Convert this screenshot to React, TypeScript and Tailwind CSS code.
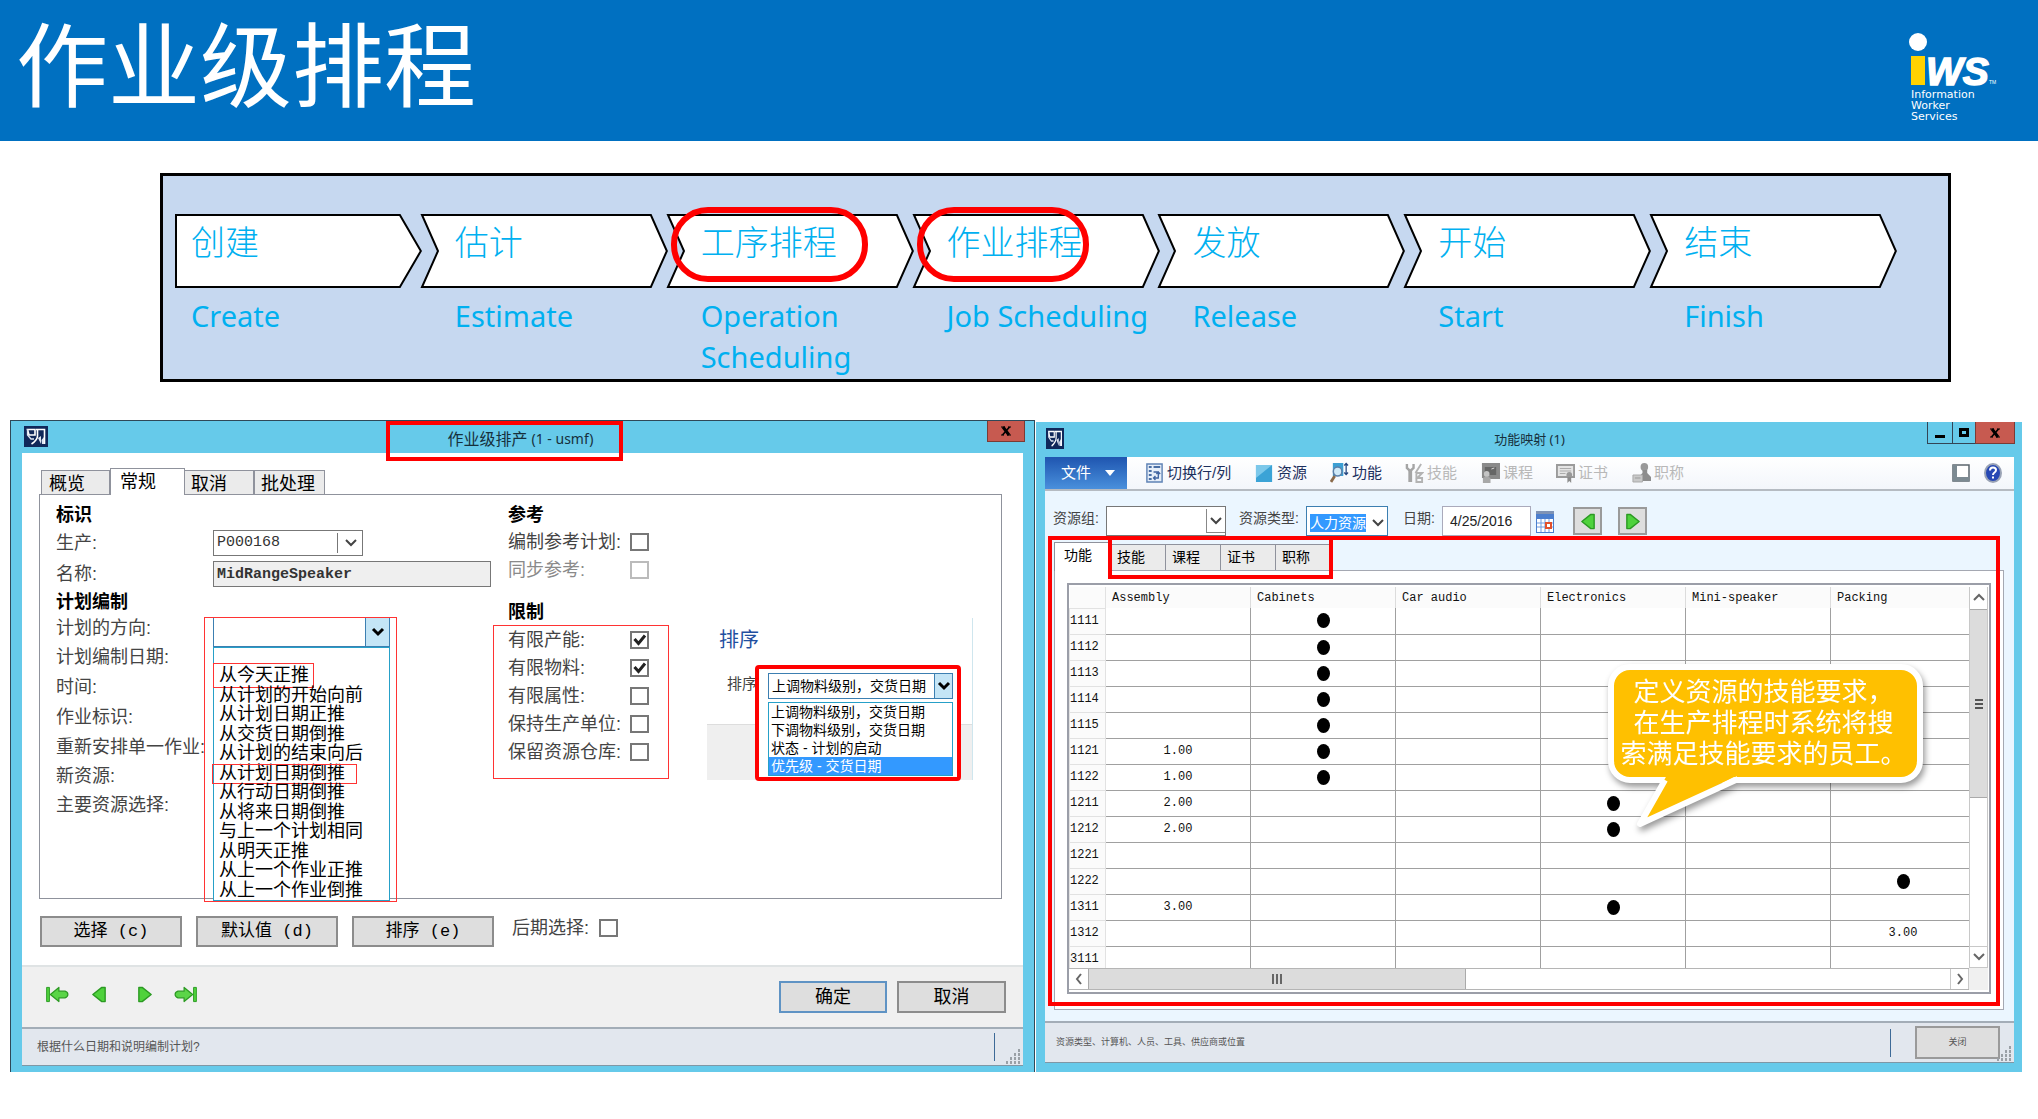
import { useState, type ReactNode } from "react";

const steps = [
  { zh: "创建", en: "Create" },
  { zh: "估计", en: "Estimate" },
  { zh: "工序排程", en: "Operation Scheduling", ring: "-left-[30px] w-[197px]" },
  { zh: "作业排程", en: "Job Scheduling", ring: "-left-[30px] w-[172px]" },
  { zh: "发放", en: "Release" },
  { zh: "开始", en: "Start" },
  { zh: "结束", en: "Finish" },
];

const directions = [
  "从今天正推", "从计划的开始向前", "从计划日期正推", "从交货日期倒推",
  "从计划的结束向后", "从计划日期倒推", "从行动日期倒推", "从将来日期倒推",
  "与上一个计划相同", "从明天正推", "从上一个作业正推", "从上一个作业倒推",
];

const sortOptions = ["上调物料级别，交货日期", "下调物料级别，交货日期", "状态 - 计划的启动", "优先级 - 交货日期"];

const columns = ["Assembly", "Cabinets", "Car audio", "Electronics", "Mini-speaker", "Packing"];

// "x" = a dot, anything else is printed as is
const rows: { id: string; cells: string[] }[] = [
  { id: "1111", cells: ["", "x", "", "", "", ""] },
  { id: "1112", cells: ["", "x", "", "", "", ""] },
  { id: "1113", cells: ["", "x", "", "", "", ""] },
  { id: "1114", cells: ["", "x", "", "", "", ""] },
  { id: "1115", cells: ["", "x", "", "", "", ""] },
  { id: "1121", cells: ["1.00", "x", "", "", "", ""] },
  { id: "1122", cells: ["1.00", "x", "", "", "", ""] },
  { id: "1211", cells: ["2.00", "", "", "x", "", ""] },
  { id: "1212", cells: ["2.00", "", "", "x", "", ""] },
  { id: "1221", cells: ["", "", "", "", "", ""] },
  { id: "1222", cells: ["", "", "", "", "", "x"] },
  { id: "1311", cells: ["3.00", "", "", "x", "", ""] },
  { id: "1312", cells: ["", "", "", "", "", "3.00"] },
  { id: "3111", cells: ["", "", "", "", "", ""] },
];

function Chevron({ className = "", d = "M3 5l5 5 5-5" }: { className?: string; d?: string }) {
  return (
    <svg viewBox="0 0 16 16" className={`h-4 w-4 ${className}`} fill="none" stroke="currentColor" strokeWidth="2">
      <path d={d} />
    </svg>
  );
}

function CloseMark() {
  return (
    <svg viewBox="0 0 12 10" className="h-[10px] w-3" fill="none" stroke="#000">
      <path d="M3 1l6 8" strokeWidth="3" />
      <path d="M9.500 1l-7 8" strokeWidth="1.600" />
      <path d="M1 1h4M8 1h3M1 9h3M7 9h4" strokeWidth="1.200" />
    </svg>
  );
}

function AppIcon({ className = "" }: { className?: string }) {
  return (
    <svg viewBox="0 0 24 21" preserveAspectRatio="none" className={className}>
      <rect width="24" height="21" fill="#10285a" />
      <path d="M3.500 3.500H11V9H5z" fill="none" stroke="#fff" strokeWidth="1.600" />
      <path d="M3.500 3v6l3.500 4h3" fill="none" stroke="#dfe6f2" strokeWidth="1.300" />
      <path d="M12 3.500h8.500V18M13.500 4v6c0 4-3 6-6 8" fill="none" stroke="#fff" strokeWidth="1.600" />
      <path d="M14 12l3-2v8zM17.500 14l2.500-3v7h-2z" fill="#dfe6f2" />
    </svg>
  );
}

function Triangle({ back = false }: { back?: boolean }) {
  return (
    <svg viewBox="0 0 16 18" className="h-[17px] w-4">
      <path d={back ? "M14.500 1.500v15H11L1.500 9 11 1.500z" : "M1.500 1.500v15H5L14.500 9 5 1.500z"} fill="#4fd23c" stroke="#2b9a22" strokeWidth="1.500" strokeLinejoin="round" />
    </svg>
  );
}

function EndArrow({ back = false }: { back?: boolean }) {
  return (
    <svg viewBox="0 0 24 18" className={`h-[17px] w-6 ${back ? "" : "-scale-x-100"}`}>
      <path d="M1 1.500h3v15H1z" fill="#4fd23c" stroke="#2b9a22" />
      <path d="M5 9l9-7.500v4h6.500q3 1 3 3.500t-3 3.500H14v4z" fill="#5bd548" stroke="#2b9a22" strokeWidth="1.300" strokeLinejoin="round" />
    </svg>
  );
}

function Grip() {
  return (
    <svg viewBox="0 0 16 16" className="h-4 w-4" fill="#9aa0a6">
      <path d="M13 0h2v3h-2zM13 4h2v3h-2zM9 4h2v3H9zM13 8h2v3h-2zM9 8h2v3H9zM5 8h2v3H5zM13 12h2v3h-2zM9 12h2v3H9zM5 12h2v3H5zM1 12h2v3H1z" />
    </svg>
  );
}

function Check({ label, dim = false, on = false, width = "w-[122px]" }: { label: string; dim?: boolean; on?: boolean; width?: string }) {
  const [checked, setChecked] = useState(on);
  return (
    <label className={`flex h-7 items-center ${dim ? "text-[#8a8a8a]" : "text-[#444]"}`}>
      <span className={`${width} shrink-0 whitespace-nowrap`}>{label}</span>
      <span className="relative flex">
        <input type="checkbox" checked={checked} disabled={dim} onChange={(e) => setChecked(e.target.checked)}
          className={`h-[18px] w-[19px] appearance-none border-2 bg-white ${dim ? "border-[#bbb]" : "border-[#777]"}`} />
        {checked && (
          <svg viewBox="0 0 19 18" className="pointer-events-none absolute inset-0 h-[18px] w-[19px]" fill="none" stroke="#222" strokeWidth="3">
            <path d="M4.500 8l4 4.500 6.500-8" />
          </svg>
        )}
      </span>
    </label>
  );
}

function Tab({ children, active = false, className = "" }: { children: ReactNode; active?: boolean; className?: string }) {
  return (
    <button type="button" role="tab" aria-selected={active}
      className={`border border-b-0 border-[#8f929c] text-left text-black ${active ? "relative z-10 -mb-px bg-white" : "bg-[#ebebeb]"} ${className}`}>
      {children}
    </button>
  );
}

function Logo() {
  return (
    <div className="w-[106px] text-white">
      <svg viewBox="0 0 100 54" className="h-[54px] w-[100px] overflow-visible">
        <circle cx="9" cy="9" r="9" fill="#fff" />
        <rect x="2" y="23" width="14" height="29" fill="#ffd200" />
        <text x="17" y="52" fill="#fff" stroke="#fff" strokeWidth="1.500" className="font-['Liberation_Sans',sans-serif] text-[39px] font-bold italic">WS</text>
        <text x="80" y="51" fill="#fff" className="font-['Liberation_Sans',sans-serif] text-[5px]">TM</text>
      </svg>
      <div className="pt-[2px] pl-[2px] font-['DejaVu_Sans',sans-serif] text-[11px] leading-[11px]">
        <p>Information</p>
        <p>Worker</p>
        <p>Services</p>
      </div>
    </div>
  );
}

function Process() {
  return (
    <section className="mr-[87px] ml-[160px] h-[209px] border-[3px] border-black bg-[#c6d8f0] pt-[38px] pr-[52px] pl-3">
      <ol className="grid grid-cols-7 items-start text-[#00b0f0]">
        {steps.map((s, i) => (
          <li key={s.en} className="grid">
            <svg viewBox="0 0 246 74" preserveAspectRatio="none" className="col-start-1 row-start-1 h-[74px] w-full overflow-visible">
              <path d={i === 0 ? "M1 1H225L246 37 225 73H1z" : "M1 1H230L246 37 230 73H1L17 37z"} fill="#fff" stroke="#000" strokeWidth="2" />
            </svg>
            <div className={`relative col-start-1 row-start-1 pt-2 ${i === 0 ? "pl-4" : "pl-[34px]"}`}>
              <span className="relative font-['Noto_Sans_CJK_SC',sans-serif] text-[34px] leading-[38px] font-light">
                {s.zh}
                {s.ring && <span className={`absolute -top-[9px] h-[75px] rounded-[37px] border-[6px] border-[#ff0000] ${s.ring}`} />}
              </span>
            </div>
            <p className={`pt-[7px] font-['Noto_Sans',sans-serif] text-[29px] leading-[41px] ${i === 0 ? "pl-4" : "pl-[34px]"}`}>{s.en}</p>
          </li>
        ))}
      </ol>
    </section>
  );
}

function SortPane() {
  return (
    <div className="relative mt-[116px] h-[162px] w-[266px] border-r border-[#cfe6ee]">
      <h3 className="pl-3 text-[20px] leading-[44px] text-[#1f4fa0]">排序</h3>
      <label htmlFor="sort" className="block h-[62px] pl-5 text-[15px] leading-[44px] text-[#444]">排序:</label>
      <div className="h-14 border-t border-[#ddd] bg-[#efefef]" />
      <div className="absolute top-[47px] left-12 w-[206px] rounded-sm border-4 border-[#ff0000] bg-white pt-1 pr-1 pb-[1px] pl-[9px] text-[14px] text-black">
        <div className="relative">
          <select id="sort" className="h-[26px] w-full appearance-none border border-[#3c7fb1] bg-white pl-[3px]">
            <option>上调物料级别，交货日期</option>
          </select>
          <span className="pointer-events-none absolute top-px right-px flex h-6 w-[18px] items-center justify-center border-l border-[#3c7fb1] bg-[#c4e5f6]">
            <Chevron className="w-3 stroke-3" />
          </span>
        </div>
        <ul role="listbox" className="mt-[3px] border border-[#26a0c8] bg-white">
          {sortOptions.map((o, i) => (
            <li key={o} role="option" aria-selected={i === 3} className={`h-[18px] pl-[2px] leading-[18px] whitespace-nowrap ${i === 3 ? "bg-[#3399ff] text-white" : ""}`}>{o}</li>
          ))}
        </ul>
      </div>
    </div>
  );
}

function JobWindow() {
  return (
    <section className="border border-b-0 border-[#2f4858] bg-[#66caea] px-[11px] pb-[6px] text-[18px]">
      <header className="relative flex h-8 justify-center">
        <AppIcon className="absolute top-[5px] left-[2px] h-[21px] w-6" />
        <h2 className="relative z-10 mr-9 flex h-10 w-[237px] shrink-0 items-center justify-center self-start border-4 border-[#ff0000] pb-[5px] pl-8 font-['Noto_Sans','Noto_Sans_CJK_SC',sans-serif] text-[16px] text-[#16303c]">
          作业级排产<span className="pl-1 text-[14px]">(1 - usmf)</span>
        </h2>
        <button type="button" aria-label="关闭" className="absolute top-0 -right-[2px] flex h-[21px] w-[38px] items-center justify-center border border-t-0 border-[#7a3b35] bg-[#c75a50]">
          <CloseMark />
        </button>
      </header>

      <div className="bg-white">
        <div className="pt-[15px] pr-[21px] pl-[17px]">
          <div role="tablist" className="flex h-[26px] items-end pl-[2px]">
            <Tab className="h-6 w-[69px] pl-[7px]">概览</Tab>
            <Tab active className="h-[27px] w-[75px] pb-[3px] pl-[9px]">常规</Tab>
            <Tab className="h-6 w-[69px] border-l-0 pl-[6px]">取消</Tab>
            <Tab className="h-6 w-[71px] border-l pl-[6px]">批处理</Tab>
          </div>
          <div className="grid h-[405px] grid-cols-[452fr_199fr_294fr] border border-[#8f929c] pt-[7px] pl-4">
            <div className="grid grid-cols-[157px_1fr] grid-rows-[26px_30px_32px_24px_29px_29px_30px_30px_31px_27px_30px] items-center text-[#444]">
              <h3 className="col-span-2 font-bold text-black">标识</h3>
              <label htmlFor="prod">生产:</label>
              <div className="relative w-[150px]">
                <select id="prod" className="block h-[26px] w-full appearance-none border border-[#777] bg-white pl-[3px] font-['Liberation_Mono',monospace] text-[15px] text-[#333]">
                  <option>P000168</option>
                </select>
                <span className="pointer-events-none absolute top-[3px] right-0 flex h-5 w-[26px] items-center justify-center border-l border-[#777]"><Chevron /></span>
              </div>
              <label htmlFor="name">名称:</label>
              <input id="name" readOnly value="MidRangeSpeaker" className="h-[26px] w-[278px] border border-[#777] bg-[#efefef] pl-[3px] font-['Liberation_Mono',monospace] text-[15px] font-bold text-[#333]" />
              <h3 className="col-span-2 font-bold text-black">计划编制</h3>
              <label htmlFor="dir">计划的方向:</label>
              <div className="relative z-10 h-full w-[177px] text-black">
                <div className="absolute top-[3px] w-full">
                  <select id="dir" className="block h-[30px] w-full appearance-none border border-[#3c7fb1] bg-white">
                    <option></option>
                  </select>
                  <span className="pointer-events-none absolute top-px right-px flex h-7 w-6 items-center justify-center border-l border-[#3c7fb1] bg-[#c4e5f6]"><Chevron className="stroke-3" /></span>
                  <ul role="listbox" className="grid h-[254px] auto-rows-fr border border-[#26a0c8] bg-white pt-[18px]">
                    {directions.map((d, i) => (
                      <li key={d} role="option" aria-selected={false} className="relative flex items-center pl-[5px] leading-[19px] whitespace-nowrap">
                        {d}
                        {i === 0 && <span className="absolute -top-[3px] -left-px h-[25px] w-[101px] border border-[#f33]" />}
                        {i === 5 && <span className="absolute top-0 -left-[2px] h-5 w-[145px] border border-[#f33]" />}
                      </li>
                    ))}
                  </ul>
                  <div className="pointer-events-none absolute top-0 -right-[7px] -bottom-px -left-[9px] border border-[#f33]" />
                </div>
              </div>
              {["计划编制日期:", "时间:", "作业标识:", "重新安排单一作业:", "新资源:", "主要资源选择:"].map((t) => (
                <span key={t} className="col-span-2 whitespace-nowrap">{t}</span>
              ))}
            </div>

            <div>
              <h3 className="leading-[26px] font-bold">参考</h3>
              <Check label="编制参考计划:" />
              <Check label="同步参考:" dim />
              <h3 className="mt-[15px] leading-[26px] font-bold">限制</h3>
              <div className="-ml-[15px] h-[154px] w-[176px] border border-[#f33] pl-[14px]">
                <Check label="有限产能:" on />
                <Check label="有限物料:" on />
                <Check label="有限属性:" />
                <Check label="保持生产单位:" />
                <Check label="保留资源仓库:" />
              </div>
            </div>

            <SortPane />
          </div>

          <div className="flex items-start gap-[14px] pt-[17px] pb-[18px] pl-px">
            {["选择 (c)", "默认值 (d)", "排序 (e)"].map((b) => (
              <button key={b} type="button" className="h-[31px] w-[142px] border-2 border-[#8c8c8c] bg-[#dedede] font-['Liberation_Mono','Noto_Sans_CJK_SC',monospace] text-[17px] leading-[26px]">{b}</button>
            ))}
            <div className="-mt-[2px] pl-1"><Check label="后期选择:" width="w-[87px]" /></div>
          </div>
        </div>

        <footer>
          <div className="flex h-[62px] items-center justify-between border-t-2 border-[#dfe3e4] bg-[#f0f0f0] pr-[17px] pl-[23px]">
            <div className="flex items-center pb-[6px]">
              <button type="button" aria-label="第一条"><EndArrow back /></button>
              <button type="button" aria-label="上一条" className="ml-[22px]"><Triangle back /></button>
              <button type="button" aria-label="下一条" className="ml-[30px]"><Triangle /></button>
              <button type="button" aria-label="最后一条" className="ml-[21px]"><EndArrow /></button>
            </div>
            <div className="flex gap-[10px]">
              <button type="button" className="h-8 w-[108px] border-2 border-[#5f93c4] bg-[#dedede]">确定</button>
              <button type="button" className="h-8 w-[109px] border-2 border-[#8c8c8c] bg-[#dedede]">取消</button>
            </div>
          </div>
          <div className="flex h-[39px] items-center border-t-2 border-b border-t-[#a3adb7] border-b-[#7f97a5] bg-[#e2e7ee] pr-[2px] pl-[15px] text-[12px] text-[#555]">
            <p className="grow">根据什么日期和说明编制计划?</p>
            <div className="h-7 w-px bg-[#3d6a97]" />
            <div className="self-end pl-[10px]"><Grip /></div>
          </div>
        </footer>
      </div>
    </section>
  );
}

function ToolIcon({ name }: { name: string }) {
  return (
    <svg viewBox="0 0 20 22" preserveAspectRatio="none" className="h-[22px] w-[19px]" fill="none">
      {name === "swap" && (
        <>
          <path d="M2 2h16v18H2z" fill="#e6eef8" stroke="#5f83b5" strokeWidth="1.500" />
          <path d="M4 5h3M9 5h7M4 9h3M4 13h3M4 17h3" stroke="#4a6fa5" strokeWidth="2" />
          <path d="M9 10h5v6H9M12 12l2-2 2 2M11 14l-2 2 2 2" stroke="#3f63a0" strokeWidth="1.400" />
        </>
      )}
      {name === "square" && (
        <>
          <rect x="1" y="3" width="17" height="17" fill="#3ba3d6" />
          <path d="M1 3h17L1 16z" fill="#7cc8ea" />
        </>
      )}
      {name === "find" && (
        <>
          <rect x="3" y="1" width="11" height="13" fill="#3c9fd3" />
          <path d="M17 1v12M15 3.500l2-2 2 2M15 10.500l2 2 2-2" stroke="#23457f" strokeWidth="1.300" />
          <circle cx="8" cy="9.500" r="4.500" fill="#cfe9f7" stroke="#5c7fa8" strokeWidth="1.500" />
          <path d="M5 14l-4 6" stroke="#8a6a4a" strokeWidth="3" />
        </>
      )}
      {name === "tools" && (
        <>
          <path d="M5.500 8v12" stroke="#a5a5a5" strokeWidth="4" />
          <path d="M2 2v4l3.500 3L9 6V2" stroke="#a5a5a5" strokeWidth="2.500" />
          <path d="M17 2l-6 9M12 11h6l-5 5h5v4h-6v-5z" stroke="#b3b3b3" strokeWidth="2" />
        </>
      )}
      {name === "course" && (
        <>
          <path d="M1 2h18v14H9" stroke="#8a8a8a" strokeWidth="2" fill="#9d9d9d" />
          <path d="M1 2h18v14H1z" fill="#8a8a8a" />
          <path d="M4 5h12v8H4z" fill="#666" />
          <path d="M11 7l3-1" stroke="#ddd" />
          <circle cx="6" cy="12" r="3" fill="#c4c4c4" />
          <path d="M2 21v-5q4-3 8 0v5z" fill="#a8a8a8" />
        </>
      )}
      {name === "cert" && (
        <>
          <path d="M1 3h18v12H1z" fill="#e4e4e4" stroke="#9b9b9b" strokeWidth="2" />
          <path d="M4 6.500h12M4 9h12M4 11.500h6" stroke="#aaa" />
          <circle cx="14" cy="13" r="3" fill="#999" />
          <path d="M12 15v6l2-2 2 2v-6z" fill="#8d8d8d" />
        </>
      )}
      {name === "title" && (
        <>
          <circle cx="13" cy="5" r="4" fill="#999" />
          <path d="M11 8h5v3l4 4v4H7v-4l4-4z" fill="#8d8d8d" />
          <path d="M1 13h10v7H1z" fill="#c9c9c9" stroke="#aaa" />
          <path d="M3 16h6" stroke="#999" />
        </>
      )}
    </svg>
  );
}

const tools = [
  { icon: "swap", label: "切换行/列", cls: "w-[110px]" },
  { icon: "square", label: "资源", cls: "w-[75px]" },
  { icon: "find", label: "功能", cls: "w-[75px]" },
  { icon: "tools", label: "技能", cls: "w-[76px]", off: true },
  { icon: "course", label: "课程", cls: "w-[75px]", off: true },
  { icon: "cert", label: "证书", cls: "w-[76px]", off: true },
  { icon: "title", label: "职称", cls: "w-[75px]", off: true },
];

function Matrix() {
  return (
    <div className="grid grid-cols-[minmax(0,1fr)_19px] grid-rows-[381px_22px] border-2 border-[#9b9ea8] py-[2px] pr-px">
      <div className="overflow-hidden">
        <table className="w-[906px] table-fixed border-collapse font-['Liberation_Mono',monospace] text-[12px] leading-4 text-[#111]">
          <thead>
            <tr className="h-[21px] bg-[#fbfbfb]">
              <td className="w-9 border-r border-[#e2e2e2]" />
              {columns.map((c) => (
                <th key={c} scope="col" className="w-[145px] border-r border-[#dcdcdc] p-0 pl-[6px] text-left font-normal">{c}</th>
              ))}
            </tr>
          </thead>
          <tbody>
            {rows.map((r) => (
              <tr key={r.id} className="h-[26px]">
                <th scope="row" className="border border-[#e2e2e2] bg-[#fbfbfb] p-0 text-left font-normal">{r.id}</th>
                {r.cells.map((c, i) => (
                  <td key={i} className="border border-t-0 border-[#a0a0a0] p-0 text-center">
                    {c === "x" ? <span className="mx-auto block h-[15px] w-[13px] rounded-[50%] bg-black" /> : c}
                  </td>
                ))}
              </tr>
            ))}
          </tbody>
        </table>
      </div>

      <div className="flex flex-col border-x border-[#c8c8c8] bg-white text-[#666]">
        <button type="button" aria-label="向上" className="flex h-[22px] items-center justify-center"><Chevron className="w-3" d="M3 10l5-5 5 5" /></button>
        <div className="flex h-[189px] flex-col items-center justify-center gap-[2px] border border-x-0 border-[#aaa] bg-[#dcdcdc]">
          <span className="h-[2px] w-2 bg-[#555]" /><span className="h-[2px] w-2 bg-[#555]" /><span className="h-[2px] w-2 bg-[#555]" />
        </div>
        <button type="button" aria-label="向下" className="mt-auto flex h-[22px] items-center justify-center border-y border-[#c8c8c8]"><Chevron className="w-3" /></button>
      </div>

      <div className="flex border-y border-[#b5b5b5] bg-white text-[#666]">
        <button type="button" aria-label="向左" className="flex w-[19px] items-center justify-center"><Chevron d="M10 3L6 8l4 5" /></button>
        <div className="flex w-[42%] items-center justify-center gap-[2px] border-x border-[#aaa] bg-[#dcdcdc]">
          <span className="h-[10px] w-[2px] bg-[#666]" /><span className="h-[10px] w-[2px] bg-[#666]" /><span className="h-[10px] w-[2px] bg-[#666]" />
        </div>
        <button type="button" aria-label="向右" className="ml-auto flex w-[19px] items-center justify-center border-x border-[#c8c8c8]"><Chevron d="M6 3l4 5-4 5" /></button>
      </div>
      <div className="bg-[#f0f0f0]" />
    </div>
  );
}

function Callout() {
  return (
    <div className="absolute top-[128px] left-[563px] z-30 h-[119px] w-[315px] rounded-[22px] border-[6px] border-white bg-[#ffc000] pt-[7px] pr-1 text-center text-[26px] leading-[31px] whitespace-nowrap text-white drop-shadow-[2px_4px_3px_rgba(0,0,0,0.4)]">
      定义资源的技能要求，<br />在生产排程时系统将搜<br />索满足技能要求的员工。
      <svg viewBox="0 0 120 54" className="absolute top-[104px] left-[12px] h-[54px] w-[120px]">
        <path d="M41 1L14 50 112 1z" fill="#ffc000" />
        <path d="M39 6L14 50 112 5" fill="none" stroke="#fff" strokeWidth="6" strokeLinejoin="round" />
      </svg>
    </div>
  );
}

function MapWindow() {
  const [date, setDate] = useState("4/25/2016");
  return (
    <section className="mt-[2px] flex flex-col bg-[#66caea] pr-2 pb-[9px] pl-[9px] text-[14px]">
      <header className="relative flex h-[35px] items-center justify-center">
        <AppIcon className="absolute top-[6px] left-px h-[21px] w-[18px]" />
        <h2 className="font-['Noto_Sans','Noto_Sans_CJK_SC',sans-serif] text-[13px] text-[#16303c]">功能映射 (1)</h2>
        <div className="absolute top-0 -right-px flex h-[22px] text-black">
          <button type="button" aria-label="最小化" className="flex w-[26px] items-center justify-center border border-t-0 border-[#345]"><span className="mt-2 h-[3px] w-[10px] bg-black" /></button>
          <button type="button" aria-label="最大化" className="flex w-[22px] items-center justify-center border-b border-[#345]"><span className="h-[9px] w-[10px] border-[3px] border-black" /></button>
          <button type="button" aria-label="关闭" className="flex w-10 items-center justify-center border border-t-0 border-[#7a3b35] bg-[#c75a50]"><CloseMark /></button>
        </div>
      </header>

      <div className="flex flex-col bg-[#ebf6ff]">
        <nav className="flex h-[34px] items-center border-b-2 border-[#b5bbc2] bg-gradient-to-b from-white to-[#f3f6fb] text-[15px] text-[#1c2f5c]">
          <button type="button" className="mr-[18px] flex h-8 w-[82px] items-center justify-between bg-gradient-to-b from-[#1f55b0] to-[#4a90dc] pr-3 pl-4 text-white">
            文件
            <svg viewBox="0 0 10 6" className="h-[6px] w-[10px]" fill="#fff"><path d="M0 0h10L5 6z" /></svg>
          </button>
          {tools.map((t) => (
            <button key={t.label} type="button" disabled={t.off} className={`flex shrink-0 items-center gap-[3px] whitespace-nowrap ${t.cls} ${t.off ? "text-[#b8b8b8]" : ""}`}>
              <ToolIcon name={t.icon} />
              {t.label}
            </button>
          ))}
          <div className="ml-auto flex gap-[14px] pr-3">
            <button type="button" aria-label="视图">
              <svg viewBox="0 0 18 18" className="h-[18px] w-[18px]"><path d="M1 1h16v16H1z" fill="#fff" stroke="#5b666e" strokeWidth="1.500" /><path d="M1 1h4v16H1zM1 13h16v4H1z" fill="#7c8a92" /></svg>
            </button>
            <button type="button" aria-label="帮助">
              <svg viewBox="0 0 18 20" className="h-5 w-[18px]">
                <ellipse cx="9" cy="10" rx="8" ry="9" fill="#2748b4" stroke="#9aa3b5" strokeWidth="2" />
                <path d="M6 7.500q0-3 3-3t3 2.500q0 1.500-1.500 2.500T9 12M9 13.500v2" fill="none" stroke="#fff" strokeWidth="2" />
              </svg>
            </button>
          </div>
        </nav>

        <form className="flex h-[45px] items-end pl-2 text-[#444]">
          <label htmlFor="group" className="w-[53px] pb-[7px]">资源组:</label>
          <div className="relative w-[120px]">
            <select id="group" className="block h-[30px] w-full appearance-none border border-[#777] bg-white"><option></option></select>
            <span className="pointer-events-none absolute top-[3px] right-px flex h-6 w-[19px] items-center justify-center border-b border-l border-[#888]"><Chevron /></span>
          </div>
          <label htmlFor="kind" className="ml-[13px] w-[67px] pb-[7px]">资源类型:</label>
          <div className="flex h-[30px] w-[82px] items-center justify-between border border-[#3c7fb1] bg-white pr-px pl-[3px]">
            <input id="kind" readOnly value="人力资源" className="mt-1 h-[18px] w-14 bg-[#3399ff] text-[14px] leading-[18px] text-white" />
            <Chevron className="mt-1" />
          </div>
          <label htmlFor="date" className="ml-[15px] w-[39px] pb-[7px]">日期:</label>
          <input id="date" value={date} onChange={(e) => setDate(e.target.value)} className="h-[30px] w-[89px] border border-[#aab] bg-white pl-[7px] font-['Liberation_Sans',sans-serif] text-[14px] text-[#222]" />
          <button type="button" aria-label="日历" className="ml-[5px] pb-[3px]">
            <svg viewBox="0 0 18 22" className="h-[22px] w-[18px]">
              <path d="M0 2h18v20H0z" fill="#4c7fce" />
              <path d="M0 0h18v3H0z" fill="#7f93b5" />
              <path d="M1 8h16v13H1z" fill="#fff" />
              <path d="M5 8v13M9 8v13M13 8v13M1 12h16M1 16h16" stroke="#6f9be0" />
              <rect x="10" y="12" width="5" height="5" fill="#fff" stroke="#e2502c" strokeWidth="2" />
            </svg>
          </button>
          <button type="button" aria-label="上一天" className="mb-px ml-[19px] flex h-7 w-[29px] items-center justify-center border-2 border-[#9a9a9a] bg-[#dedede]"><Triangle back /></button>
          <button type="button" aria-label="下一天" className="mb-px ml-4 flex h-7 w-[29px] items-center justify-center border-2 border-[#9a9a9a] bg-[#dedede]"><Triangle /></button>
        </form>

        <div className="relative pr-[10px] pb-[11px] pl-[9px]">
          <div role="tablist" className="relative flex h-[34px] items-end">
            <Tab active className="h-[29px] w-[56px] border-r-0 pb-1 pl-[9px]">功能</Tab>
            <Tab className="h-[26px] w-[56px] pl-[6px]">技能</Tab>
            <Tab className="h-[26px] w-[55px] border-l-0 pl-[6px]">课程</Tab>
            <Tab className="h-[26px] w-[55px] border-l-0 pl-[6px]">证书</Tab>
            <Tab className="h-[26px] w-[55px] border-l-0 pl-[6px]">职称</Tab>
            <div className="pointer-events-none absolute top-0 left-[54px] z-20 h-[43px] w-[225px] border-4 border-[#ff0000]" />
          </div>
          <div className="border border-[#a5a8b2] bg-white px-3 pt-3 pb-[15px]">
            <Matrix />
          </div>
          <div className="pointer-events-none absolute top-0 right-[14px] bottom-[15px] left-[3px] z-20 border-4 border-[#ff0000]" />
          <Callout />
        </div>

        <footer className="flex h-[42px] items-center border-t-2 border-b border-t-[#a3adb7] border-b-[#7f97a5] bg-[#e2e7ee] pr-[2px] pl-[11px] text-[9px] text-[#555]">
          <p className="grow">资源类型、计算机、人员、工具、供应商或位置</p>
          <div className="h-7 w-px bg-[#3d6a97]" />
          <button type="button" className="ml-6 h-[33px] w-[85px] border-2 border-[#9a9a9a] bg-[#dedede]">关闭</button>
          <div className="-ml-1 self-end"><Grip /></div>
        </footer>
      </div>
    </section>
  );
}

export default function App() {
  return (
    <main className="bg-white font-['Liberation_Sans','Noto_Sans_CJK_SC',sans-serif]">
      <header className="flex h-[141px] items-start justify-between bg-[#0070c1] pr-[23px] pl-4">
        <h1 className="font-['Noto_Sans_CJK_SC',sans-serif] text-[92px] leading-[120px] text-white">作业级排程</h1>
        <div className="pt-[33px]"><Logo /></div>
      </header>
      <div className="pt-8 pb-[38px]">
        <Process />
      </div>
      <div className="grid grid-cols-[1025fr_986fr] gap-px pr-4 pl-[10px]">
        <JobWindow />
        <MapWindow />
      </div>
    </main>
  );
}
